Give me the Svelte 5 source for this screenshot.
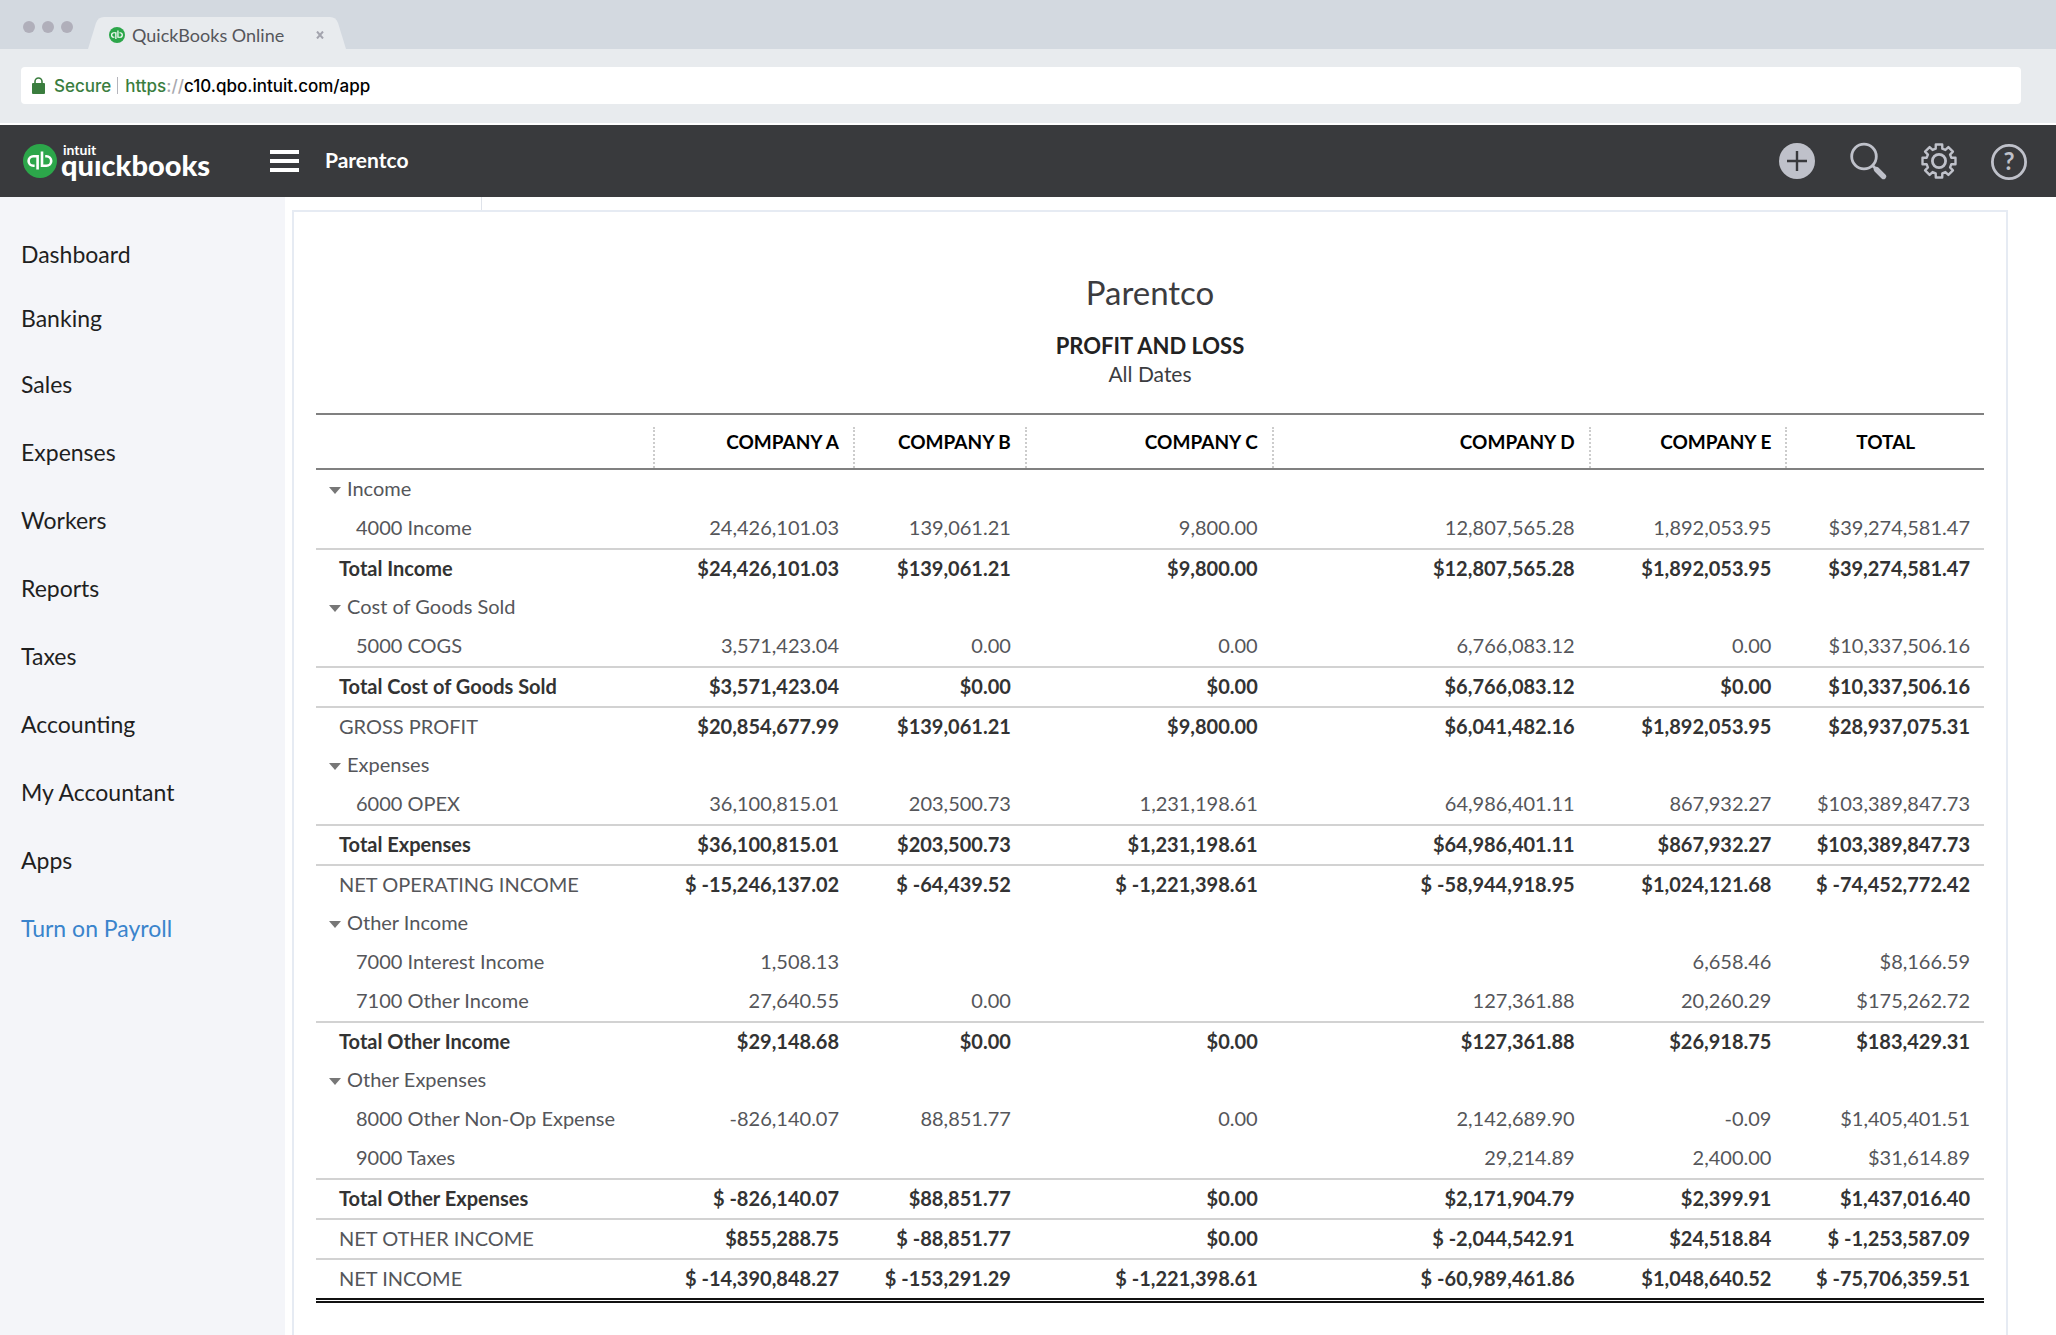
<script lang="ts">
  type Kind = 'section' | 'item' | 'total' | 'net';
  type Row = { kind: Kind; label: string; values: string[] };

  const nav = [
    'Dashboard',
    'Banking',
    'Sales',
    'Expenses',
    'Workers',
    'Reports',
    'Taxes',
    'Accounting',
    'My Accountant',
    'Apps',
    'Turn on Payroll',
  ];

  // Column widths as a share of the table.
  const columns = [
    { title: '', width: 20.2 },
    { title: 'COMPANY A', width: 12 },
    { title: 'COMPANY B', width: 10.3 },
    { title: 'COMPANY C', width: 14.8 },
    { title: 'COMPANY D', width: 19 },
    { title: 'COMPANY E', width: 11.8 },
    { title: 'TOTAL', width: 11.9 },
  ];

  const section = (label: string): Row => ({ kind: 'section', label, values: ['', '', '', '', '', ''] });
  const row = (kind: Kind, label: string, ...values: string[]): Row => ({ kind, label, values });

  const rows: Row[] = [
    section('Income'),
    row('item', '4000 Income', '24,426,101.03', '139,061.21', '9,800.00', '12,807,565.28', '1,892,053.95', '$39,274,581.47'),
    row('total', 'Total Income', '$24,426,101.03', '$139,061.21', '$9,800.00', '$12,807,565.28', '$1,892,053.95', '$39,274,581.47'),
    section('Cost of Goods Sold'),
    row('item', '5000 COGS', '3,571,423.04', '0.00', '0.00', '6,766,083.12', '0.00', '$10,337,506.16'),
    row('total', 'Total Cost of Goods Sold', '$3,571,423.04', '$0.00', '$0.00', '$6,766,083.12', '$0.00', '$10,337,506.16'),
    row('net', 'GROSS PROFIT', '$20,854,677.99', '$139,061.21', '$9,800.00', '$6,041,482.16', '$1,892,053.95', '$28,937,075.31'),
    section('Expenses'),
    row('item', '6000 OPEX', '36,100,815.01', '203,500.73', '1,231,198.61', '64,986,401.11', '867,932.27', '$103,389,847.73'),
    row('total', 'Total Expenses', '$36,100,815.01', '$203,500.73', '$1,231,198.61', '$64,986,401.11', '$867,932.27', '$103,389,847.73'),
    row('net', 'NET OPERATING INCOME', '$ -15,246,137.02', '$ -64,439.52', '$ -1,221,398.61', '$ -58,944,918.95', '$1,024,121.68', '$ -74,452,772.42'),
    section('Other Income'),
    row('item', '7000 Interest Income', '1,508.13', '', '', '', '6,658.46', '$8,166.59'),
    row('item', '7100 Other Income', '27,640.55', '0.00', '', '127,361.88', '20,260.29', '$175,262.72'),
    row('total', 'Total Other Income', '$29,148.68', '$0.00', '$0.00', '$127,361.88', '$26,918.75', '$183,429.31'),
    section('Other Expenses'),
    row('item', '8000 Other Non-Op Expense', '-826,140.07', '88,851.77', '0.00', '2,142,689.90', '-0.09', '$1,405,401.51'),
    row('item', '9000 Taxes', '', '', '', '29,214.89', '2,400.00', '$31,614.89'),
    row('total', 'Total Other Expenses', '$ -826,140.07', '$88,851.77', '$0.00', '$2,171,904.79', '$2,399.91', '$1,437,016.40'),
    row('net', 'NET OTHER INCOME', '$855,288.75', '$ -88,851.77', '$0.00', '$ -2,044,542.91', '$24,518.84', '$ -1,253,587.09'),
    row('net', 'NET INCOME', '$ -14,390,848.27', '$ -153,291.29', '$ -1,221,398.61', '$ -60,989,461.86', '$1,048,640.52', '$ -75,706,359.51'),
  ];

  // Eight-toothed cog outline: four points per tooth, joined by straight edges.
  const gear = (() => {
    const pts: string[] = [];
    const at = (r: number, deg: number) => {
      const a = (deg * Math.PI) / 180;
      pts.push(`${(20 + r * Math.cos(a)).toFixed(2)} ${(20 + r * Math.sin(a)).toFixed(2)}`);
    };
    for (let i = 0; i < 8; i++) {
      const c = i * 45;
      at(12.8, c - 15);
      at(16.8, c - 11);
      at(16.8, c + 11);
      at(12.8, c + 15);
    }
    return `M${pts.join('L')}Z`;
  })();
</script>

{#snippet qb(size: number)}
  <svg class="qb" width={size} height={size} viewBox="0 0 34 34" aria-hidden="true">
    <circle cx="17" cy="17" r="17" fill="#2ca64a" />
    <g fill="none" stroke="#fff" stroke-width="2.6">
      <path d="M14.6 25.6V12.2H10.4a4.8 4.8 0 0 0 0 9.6h1.2" />
      <path d="M19 7.4V21.8h4.4a4.8 4.8 0 0 0 0-9.6h-1.2" />
    </g>
  </svg>
{/snippet}

<div class="page">
  <div class="tabs">
    <span class="dots"><i></i><i></i><i></i></span>
    <div class="tab">
      <svg class="shape" viewBox="0 0 258 32" preserveAspectRatio="none" aria-hidden="true">
        <path d="M0 32L8 6Q10 0 16 0H242Q248 0 250 6L258 32Z" fill="#e8ebee" />
      </svg>
      {@render qb(16)}
      <span class="tab-title">QuickBooks Online</span>
      <button class="close" aria-label="Close tab">
        <svg width="8" height="8" viewBox="0 0 8 8"><path d="M1 0.5L7 7.5M7 0.5L1 7.5" stroke="#a3a4ae" stroke-width="2" /></svg>
      </button>
    </div>
  </div>

  <div class="toolbar">
    <div class="address">
      <svg width="13" height="17" viewBox="0 0 13 17" aria-hidden="true">
        <rect y="6" width="13" height="11" rx="1" fill="#3a7d3e" />
        <path d="M3 7V4.5a3.5 3.5 0 0 1 7 0V7" fill="none" stroke="#3a7d3e" stroke-width="1.6" />
      </svg>
      <span class="secure">Secure</span>
      <span class="bar"></span>
      <label for="url"><span class="secure">https</span><span class="slashes">://</span></label>
      <input id="url" type="text" value="c10.qbo.intuit.com/app" />
    </div>
  </div>

  <header>
    <a class="logo" href="#home" aria-label="intuit quickbooks">
      {@render qb(34)}
      <span class="wordmark"><small>intuit</small><b>quıckbooks</b></span>
    </a>
    <button class="menu" aria-label="Menu"><i></i><i></i><i></i></button>
    <span class="company">Parentco</span>
    <div class="actions">
      <button aria-label="Create">
        <svg width="40" height="40" viewBox="0 0 40 40">
          <circle cx="20" cy="20" r="18" fill="#bfc1ca" />
          <path d="M10 20H30M20 10V30" stroke="#393a3d" stroke-width="2.4" />
        </svg>
      </button>
      <button aria-label="Search">
        <svg width="40" height="40" viewBox="0 0 40 40" fill="none" stroke="#bfc1ca">
          <circle cx="16" cy="15.5" r="12.3" stroke-width="2.8" />
          <path d="M24.5 24.5L28 28" stroke-width="2.8" />
          <path d="M28.5 28.5L35.5 35.5" stroke-width="5.4" stroke-linecap="round" />
        </svg>
      </button>
      <button aria-label="Settings">
        <svg width="40" height="40" viewBox="0 0 40 40" fill="none" stroke="#bfc1ca" stroke-width="2.4" stroke-linejoin="round">
          <path d={gear} />
          <circle cx="20" cy="20" r="6.6" stroke-width="2.8" />
        </svg>
      </button>
      <button aria-label="Help">
        <svg width="40" height="40" viewBox="0 0 40 40">
          <circle cx="19" cy="21" r="16.6" fill="none" stroke="#bfc1ca" stroke-width="2.8" />
          <text x="19" y="29" text-anchor="middle" fill="#bfc1ca">?</text>
        </svg>
      </button>
    </div>
  </header>

  <div class="body">
    <nav>
      <ul>
        {#each nav as item}
          <li><a href="#{item}" class:promo={item === 'Turn on Payroll'}>{item}</a></li>
        {/each}
      </ul>
    </nav>

    <main>
      <div class="rule"></div>
      <section class="report">
        <h1>Parentco</h1>
        <h2>PROFIT AND LOSS</h2>
        <p>All Dates</p>

        <table>
          <colgroup>
            {#each columns as col}
              <col style:width="{col.width}%" />
            {/each}
          </colgroup>
          <thead>
            <tr>
              {#each columns as col}
                <th scope="col"><span>{col.title}</span></th>
              {/each}
            </tr>
          </thead>
          <tbody>
            {#each rows as r}
              <tr class={r.kind}>
                <th scope="row">
                  {#if r.kind === 'section'}
                    <button>
                      <svg width="12" height="7" viewBox="0 0 12 7" aria-hidden="true"><path d="M0 0H12L6 7Z" fill="#777" /></svg>
                      {r.label}
                    </button>
                  {:else}
                    {r.label}
                  {/if}
                </th>
                {#each r.values as v}
                  <td>{v}</td>
                {/each}
              </tr>
            {/each}
          </tbody>
        </table>
      </section>
    </main>
  </div>
</div>

<style>
  :global(body) {
    margin: 0;
    background: #fff;
  }
  .page {
    min-height: 100vh;
    display: flex;
    flex-direction: column;
    font-family: Lato, "Open Sans", sans-serif;
    font-size: 20px;
    color: #1f1f1f;
  }
  button {
    padding: 0;
    border: 0;
    background: none;
    font: inherit;
    color: inherit;
    cursor: pointer;
  }
  a {
    color: inherit;
    text-decoration: none;
  }
  svg {
    display: block;
    flex: none;
  }

  /* Browser chrome */
  .tabs {
    height: 49px;
    display: flex;
    align-items: flex-end;
    background: #d3d9e0;
  }
  .dots {
    display: flex;
    gap: 7px;
    padding: 0 15px 16px 23px;
  }
  .dots i {
    width: 12px;
    height: 12px;
    border-radius: 50%;
    background: #b0afba;
  }
  .tab {
    position: relative;
    width: 258px;
    height: 32px;
    box-sizing: border-box;
    display: flex;
    align-items: center;
    gap: 7px;
    padding: 4px 22px 0 21px;
  }
  .shape {
    position: absolute;
    inset: 0;
    width: 100%;
    height: 100%;
  }
  .qb {
    position: relative;
  }
  .tab-title {
    position: relative;
    flex: 1;
    font-size: 18px;
    line-height: 24px;
    color: #55565b;
  }
  .close {
    position: relative;
  }
  .toolbar {
    padding: 18px 35px 19px 21px;
    background: #e8ebee;
    border-bottom: 2px solid #fff;
  }
  .address {
    height: 37px;
    display: flex;
    align-items: center;
    padding: 0 11px;
    border-radius: 4px;
    background: #fff;
    font: 500 17px/20px Inter, "Liberation Sans", sans-serif;
    color: #a9a9b0;
  }
  .address svg {
    margin-right: 9px;
  }
  .secure {
    color: #3a7d3e;
  }
  .bar {
    width: 1px;
    height: 17px;
    margin: 0 7px 0 6px;
    background: #b5b5bc;
  }
  .address input {
    flex: 1;
    padding: 0;
    border: 0;
    outline: 0;
    font: inherit;
    color: #000;
    background: none;
  }

  /* App header */
  header {
    height: 72px;
    display: flex;
    align-items: center;
    padding: 0 26px 0 23px;
    box-sizing: border-box;
    background: #393a3d;
    color: #fff;
  }
  .logo {
    width: 247px;
    display: flex;
    align-items: center;
    gap: 4px;
  }
  .wordmark {
    display: flex;
    flex-direction: column;
  }
  .wordmark small {
    padding-left: 2px;
    font-size: 14px;
    font-weight: 700;
    line-height: 12px;
  }
  .wordmark b {
    font-size: 29px;
    font-weight: 900;
    line-height: 18px;
    padding-bottom: 4px;
  }
  .menu {
    display: flex;
    flex-direction: column;
    gap: 5px;
  }
  .menu i {
    width: 29px;
    height: 4px;
    background: #fff;
  }
  .company {
    margin-left: 26px;
    padding-bottom: 4px;
    font-size: 21px;
    font-weight: 700;
  }
  .actions {
    margin-left: auto;
    display: flex;
    gap: 31px;
  }
  .actions text {
    font-size: 24px;
    font-weight: 700;
  }

  .body {
    flex: 1;
    display: flex;
  }
  nav {
    width: 285px;
    flex: none;
    background: #f4f5f9;
  }
  nav ul {
    margin: 0;
    padding: 25px 0 0 21px;
    list-style: none;
    font-size: 23px;
  }
  nav li {
    line-height: 68px;
  }
  nav li:nth-child(-n + 2) {
    line-height: 64px;
  }
  .promo {
    color: #3a84cc;
  }

  main {
    flex: 1;
    display: flex;
    flex-direction: column;
    padding: 0 48px 0 7px;
  }
  .rule {
    width: 189px;
    height: 13px;
    border-right: 1px solid #dfe3ea;
  }
  .report {
    flex: 1;
    padding: 60px 22px 32px;
    border: 2px solid #e6ebf3;
    border-bottom: 0;
    text-align: center;
    color: #3c3c3f;
  }
  h1 {
    margin: 0;
    font-size: 33px;
    font-weight: 400;
    line-height: 40px;
  }
  h2 {
    margin: 20px 0 0;
    font-size: 22px;
    font-weight: 700;
    line-height: 28px;
    color: #222;
  }
  p {
    margin: 0 0 25px;
    font-size: 21px;
    line-height: 28px;
  }

  /* Report table */
  table {
    width: 100%;
    table-layout: fixed;
    border-collapse: separate;
    border-spacing: 0;
    border-bottom: 5px double #111;
    line-height: 36px;
    white-space: nowrap;
  }
  td,
  tbody th {
    height: 39px;
    padding: 0 14px 0 0;
    box-sizing: border-box;
    text-align: right;
    vertical-align: top;
    font-weight: 400;
    color: #55565a;
  }
  thead th {
    height: 57px;
    padding: 12px 0 0;
    box-sizing: border-box;
    border-top: 2px solid #808080;
    border-bottom: 2px solid #808080;
    font-size: 19px;
    color: #000;
  }
  thead span {
    display: block;
    height: 41px;
    padding-right: 14px;
    border-left: 2px dotted #ccc;
    line-height: 30px;
    text-align: right;
  }
  thead th:first-child span {
    border-color: transparent;
  }
  thead th:last-child span {
    padding: 0;
    text-align: center;
  }
  tbody th {
    text-align: left;
  }
  .section th {
    padding-left: 13px;
  }
  .section button {
    display: flex;
    align-items: center;
    gap: 6px;
  }
  .section svg {
    margin-top: 4px;
  }
  .item th {
    padding-left: 40px;
  }
  .total th,
  .net th {
    padding-left: 23px;
  }
  .total > *,
  .net > * {
    height: 40px;
    border-top: 2px solid #d2d2d2;
  }
  .total > *,
  .net td {
    font-weight: 700;
    color: #333;
  }
</style>
